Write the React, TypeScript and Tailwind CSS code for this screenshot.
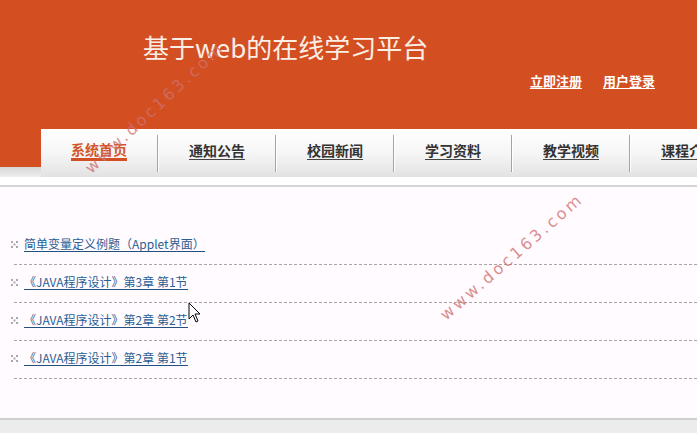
const tabs = ["系统首页", "通知公告", "校园新闻", "学习资料", "教学视频", "课程介绍"];

const items = [
  "简单变量定义例题（Applet界面）",
  "《JAVA程序设计》第3章 第1节",
  "《JAVA程序设计》第2章 第2节",
  "《JAVA程序设计》第2章 第1节",
];

function Bullet() {
  return (
    <svg width="7" height="7" viewBox="0 0 7 7" className="shrink-0">
      <rect x="0" y="0" width="2" height="2" fill="#a8a8b0" />
      <rect x="5" y="0" width="2" height="2" fill="#a8a8b0" />
      <rect x="2.5" y="2.5" width="2" height="2" fill="#a8a8b0" />
      <rect x="0" y="5" width="2" height="2" fill="#a8a8b0" />
      <rect x="5" y="5" width="2" height="2" fill="#a8a8b0" />
    </svg>
  );
}

function Watermark({ className }: { className: string }) {
  return (
    <div
      className={`pointer-events-none absolute whitespace-nowrap text-[16px] tracking-[3px] text-[#cf7070]/80 -translate-x-1/2 -translate-y-1/2 ${className}`}
      style={{ fontFamily: '"DejaVu Sans", sans-serif' }}
    >
      www.doc163.com
    </div>
  );
}

export default function App() {
  return (
    <div
      className="relative flex h-[433px] w-[697px] flex-col overflow-hidden bg-white"
      style={{ fontFamily: '"Noto Sans CJK SC", "Noto Sans", sans-serif' }}
    >
      {/* header */}
      <div className="h-[129px] shrink-0 bg-[#d34f22]">
        <div className="pl-[143px] pt-[31px] text-[26px] leading-[32px] text-[#fbeee6]">
          基于web的在线学习平台
        </div>
        <div className="mt-[9px] flex justify-end gap-[21px] pr-[42px] text-[13px] font-bold leading-[18px] text-white">
          <a className="underline underline-offset-2">立即注册</a>
          <a className="underline underline-offset-2">用户登录</a>
        </div>
      </div>

      {/* nav */}
      <div className="flex h-[48px] shrink-0">
        <div className="flex w-[41px] shrink-0 flex-col">
          <div className="h-[38px] bg-[#d34f22]" />
          <div className="flex-1 bg-gradient-to-b from-[#d6d6d6] to-[#eeeeee]" />
        </div>
        <div className="flex flex-1 bg-gradient-to-b from-white via-[#f6f6f6] to-[#e2e2e2]">
          {tabs.map((t, i) => (
            <div key={t} className="flex shrink-0 items-center">
              <div className="flex w-[116px] shrink-0 items-center justify-center pb-[5px]">
                {i === 0 ? (
                  <span className="border-b-[3px] border-[#d34f22] text-[14px] font-bold leading-[17px] text-[#d3552a]">
                    {t}
                  </span>
                ) : (
                  <span className="border-b border-[#444] text-[14px] font-bold leading-[17px] text-[#333]">
                    {t}
                  </span>
                )}
              </div>
              <div className="flex h-[37px] shrink-0">
                <div className="w-px bg-[#a4a4a4]" />
                <div className="w-px bg-white" />
              </div>
            </div>
          ))}
        </div>
      </div>

      <div className="h-[8px] shrink-0 bg-white" />
      <div className="h-[2px] shrink-0 bg-[#d4d4d4]" />

      {/* list */}
      <div className="flex-1 bg-[#fffbfe] pt-[40px]">
        {items.map((it) => (
          <div
            key={it}
            className="ml-[14px] flex h-[38px] items-start border-b border-dashed border-[#a9a2a6] pt-[9px]"
          >
            <div className="-ml-[3px] mt-[5px] mr-[6px]">
              <Bullet />
            </div>
            <a className="border-b border-[#24507f] text-[12px] leading-[15px] text-[#2b5e93]">{it}</a>
          </div>
        ))}
      </div>

      <div className="h-[15px] shrink-0 border-t-2 border-[#d0d0d0] bg-[#ececec]" />

      {/* overlays */}
      <Watermark className="left-[155px] top-[108px] -rotate-[43deg]" />
      <Watermark className="left-[512px] top-[257px] -rotate-[41deg]" />

      <svg className="pointer-events-none absolute left-[188px] top-[302px]" width="14" height="22" viewBox="0 0 14 22">
        <path d="M1 1 L1 17 L5 13 L8 20 L10 19 L7 12 L12 12 Z" fill="white" stroke="black" strokeWidth="1" strokeLinejoin="miter" />
      </svg>
    </div>
  );
}
